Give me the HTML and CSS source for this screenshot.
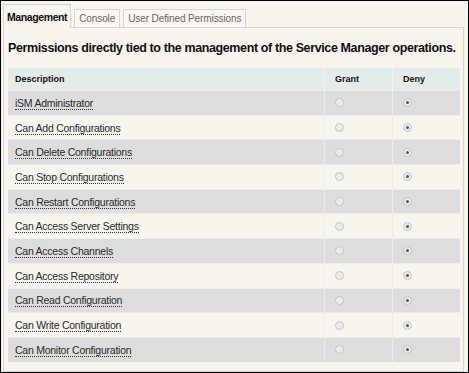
FILE: index.html
```html
<!DOCTYPE html>
<html lang="en">
<head>
    <meta charset="UTF-8">
    <title>Management Permissions</title>
    <link rel="stylesheet" href="styles.css">
</head>
<body>
    <div class="frame">
        <ul class="tabs">
            <li class="tab active">Management</li>
            <li class="tab">Console</li>
            <li class="tab">User Defined Permissions</li>
        </ul>
        <div class="panel">
            <h2>Permissions directly tied to the management of the Service Manager operations.</h2>
            <table class="perms">
                <thead>
                    <tr>
                        <th class="desc">Description</th>
                        <th class="col">Grant</th>
                        <th class="col">Deny</th>
                    </tr>
                </thead>
                <tbody>
                    <tr><td><a href="#">iSM Administrator</a></td><td><span class="radio"></span></td><td><span class="radio on"></span></td></tr>
                    <tr><td><a href="#">Can Add Configurations</a></td><td><span class="radio"></span></td><td><span class="radio on"></span></td></tr>
                    <tr><td><a href="#">Can Delete Configurations</a></td><td><span class="radio"></span></td><td><span class="radio on"></span></td></tr>
                    <tr><td><a href="#">Can Stop Configurations</a></td><td><span class="radio"></span></td><td><span class="radio on"></span></td></tr>
                    <tr><td><a href="#">Can Restart Configurations</a></td><td><span class="radio"></span></td><td><span class="radio on"></span></td></tr>
                    <tr><td><a href="#">Can Access Server Settings</a></td><td><span class="radio"></span></td><td><span class="radio on"></span></td></tr>
                    <tr><td><a href="#">Can Access Channels</a></td><td><span class="radio"></span></td><td><span class="radio on"></span></td></tr>
                    <tr><td><a href="#">Can Access Repository</a></td><td><span class="radio"></span></td><td><span class="radio on"></span></td></tr>
                    <tr><td><a href="#">Can Read Configuration</a></td><td><span class="radio"></span></td><td><span class="radio on"></span></td></tr>
                    <tr><td><a href="#">Can Write Configuration</a></td><td><span class="radio"></span></td><td><span class="radio on"></span></td></tr>
                    <tr><td><a href="#">Can Monitor Configuration</a></td><td><span class="radio"></span></td><td><span class="radio on"></span></td></tr>
                </tbody>
            </table>
        </div>
    </div>
</body>
</html>
```

FILE: styles.css
```css
html, body {
    margin: 0;
    padding: 0;
}
body {
    font-family: "Liberation Sans", Arial, sans-serif;
    color: #222;
}
.frame {
    width: 469px;
    height: 373px;
    box-sizing: border-box;
    border: 1px solid #000;
    background: #f6f5ef;
    padding: 2px 0 0 2px;
}
.tabs {
    list-style: none;
    margin: 0;
    padding: 0;
    display: flex;
    align-items: flex-end;
    gap: 3px;
    height: 24px;
}
.tab {
    height: 17px;
    line-height: 18px;
    padding: 0 4px;
    font-size: 10px;
    letter-spacing: -0.1px;
    color: #666;
    border: 1px solid #ddd3cf;
    border-bottom: none;
    background: #f8f7f3;
}
.tab.active {
    height: 23px;
    line-height: 25px;
    padding: 0 3px;
    font-size: 10.5px;
    font-weight: bold;
    letter-spacing: -0.4px;
    color: #111;
    background: #f6f5ef;
    position: relative;
    top: 1px;
}
.panel {
    width: 461px;
    height: 345px;
    box-sizing: border-box;
    border: 1px solid #ddd3cf;
    padding: 0 2px 0 4px;
}
h2 {
    margin: 13px 0 13px 0;
    font-size: 12.5px;
    letter-spacing: -0.38px;
    color: #111;
    white-space: nowrap;
}
.perms {
    width: 452px;
    border-collapse: collapse;
    font-size: 10.5px;
    letter-spacing: -0.25px;
}
.perms th {
    background: #e5ebe9;
    height: 22px;
    font-size: 9px;
    letter-spacing: 0;
    text-align: left;
    padding: 0 7px;
    color: #111;
    border-left: 1px solid #eef2f1;
}
.perms th.desc {
    border-left: none;
}
.perms td {
    height: 23.7px;
    padding: 0 7px;
    border-top: 1px solid #edede6;
    border-left: 1px solid #edede6;
}
.perms td:first-child {
    border-left: none;
}
.perms th.col, .perms td:nth-child(2), .perms td:nth-child(3) {
    width: 57px;
    padding: 0 0 0 10px;
}
.perms tbody tr:nth-child(odd) td {
    background: #dddddd;
}
.perms a {
    color: #2a2a2a;
    text-decoration: none;
    border-bottom: 1px dotted #333;
}
.radio {
    display: block;
    width: 7px;
    height: 7px;
    border-radius: 50%;
    border: 1px solid #c4c4c4;
    background: #ececec;
    position: relative;
}
.radio.on::after {
    content: "";
    position: absolute;
    left: 2px;
    top: 2px;
    width: 3px;
    height: 3px;
    border-radius: 50%;
    background: #555;
}
```
